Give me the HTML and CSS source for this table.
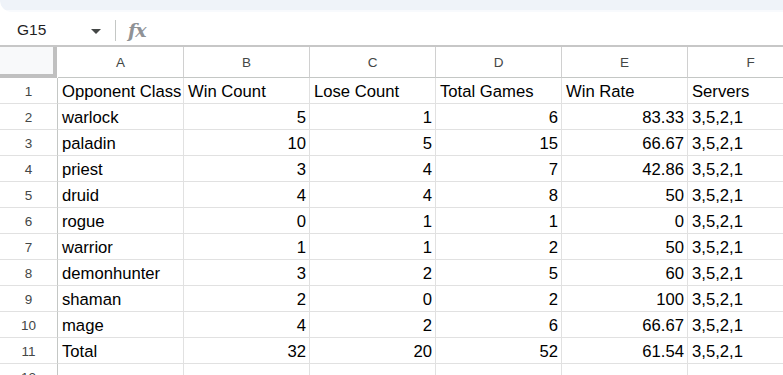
FILE: index.html
```html
<!DOCTYPE html>
<html>
<head>
<meta charset="utf-8">
<link rel="stylesheet" href="styles.css">
</head>
<body>
<div class="strip"><div class="strip-inner"></div></div>
<div class="fbar">
  <div class="namebox">
    <span class="ref">G15</span>
    <span class="caret"></span>
  </div>
  <div class="sep"></div>
  <span class="fx">fx</span>
</div>
<div class="sheet">
  <div class="corner"></div>
  <div class="ch">A</div><div class="ch">B</div><div class="ch">C</div><div class="ch">D</div><div class="ch">E</div><div class="ch">F</div>

  <div class="rh">1</div><div class="c">Opponent Class</div><div class="c">Win Count</div><div class="c">Lose Count</div><div class="c">Total Games</div><div class="c">Win Rate</div><div class="c">Servers</div>
  <div class="rh">2</div><div class="c">warlock</div><div class="c n">5</div><div class="c n">1</div><div class="c n">6</div><div class="c n">83.33</div><div class="c">3,5,2,1</div>
  <div class="rh">3</div><div class="c">paladin</div><div class="c n">10</div><div class="c n">5</div><div class="c n">15</div><div class="c n">66.67</div><div class="c">3,5,2,1</div>
  <div class="rh">4</div><div class="c">priest</div><div class="c n">3</div><div class="c n">4</div><div class="c n">7</div><div class="c n">42.86</div><div class="c">3,5,2,1</div>
  <div class="rh">5</div><div class="c">druid</div><div class="c n">4</div><div class="c n">4</div><div class="c n">8</div><div class="c n">50</div><div class="c">3,5,2,1</div>
  <div class="rh">6</div><div class="c">rogue</div><div class="c n">0</div><div class="c n">1</div><div class="c n">1</div><div class="c n">0</div><div class="c">3,5,2,1</div>
  <div class="rh">7</div><div class="c">warrior</div><div class="c n">1</div><div class="c n">1</div><div class="c n">2</div><div class="c n">50</div><div class="c">3,5,2,1</div>
  <div class="rh">8</div><div class="c">demonhunter</div><div class="c n">3</div><div class="c n">2</div><div class="c n">5</div><div class="c n">60</div><div class="c">3,5,2,1</div>
  <div class="rh">9</div><div class="c">shaman</div><div class="c n">2</div><div class="c n">0</div><div class="c n">2</div><div class="c n">100</div><div class="c">3,5,2,1</div>
  <div class="rh">10</div><div class="c">mage</div><div class="c n">4</div><div class="c n">2</div><div class="c n">6</div><div class="c n">66.67</div><div class="c">3,5,2,1</div>
  <div class="rh">11</div><div class="c">Total</div><div class="c n">32</div><div class="c n">20</div><div class="c n">52</div><div class="c n">61.54</div><div class="c">3,5,2,1</div>
  <div class="rh">12</div><div class="c"></div><div class="c"></div><div class="c"></div><div class="c"></div><div class="c"></div><div class="c"></div>
</div>
</body>
</html>
```
FILE: styles.css
```css
html, body {
  margin: 0;
  padding: 0;
  background: #ffffff;
  overflow: hidden;
  width: 783px;
  height: 375px;
  font-family: "Liberation Sans", Arial, sans-serif;
}

.strip {
  height: 12px;
  background: #ffffff;
}
.strip-inner {
  height: 12px;
  box-sizing: border-box;
  background: #f8fafd;
  border-top: 10px solid #eff3f9;
  border-bottom-left-radius: 14px;
}

.fbar {
  height: 30px;
  padding-top: 3px;
  border-bottom: 2px solid #c7c7c7;
  display: flex;
  align-items: center;
}
.namebox {
  width: 115px;
  display: flex;
  align-items: center;
  box-sizing: border-box;
  padding-left: 17px;
  padding-right: 14px;
}
.ref {
  font-size: 15.5px;
  color: #1f1f1f;
  flex: 1;
}
.caret {
  width: 0;
  height: 0;
  border-left: 5px solid transparent;
  border-right: 5px solid transparent;
  border-top: 5px solid #444746;
  margin-top: 2px;
}
.sep {
  width: 1px;
  height: 21px;
  background: #c4c7c5;
}
.fx {
  font-family: "DejaVu Serif", "Liberation Serif", serif;
  font-style: italic;
  font-weight: bold;
  font-size: 19px;
  color: #8f9296;
  margin-left: 12px;
  letter-spacing: -1px;
}

.sheet {
  display: grid;
  grid-template-columns: 58px repeat(6, 126px);
  grid-template-rows: 31px;
  grid-auto-rows: 26px;
  width: 814px;
}
.sheet > div {
  box-sizing: border-box;
  border-right: 1px solid #e1e1e1;
  border-bottom: 1px solid #e1e1e1;
  white-space: nowrap;
  overflow: hidden;
}

.corner {
  background: #f8f9fa;
  border-right: 4px solid #c0c0c0 !important;
  border-bottom: 4px solid #c0c0c0 !important;
  margin-right: 1px;
}
.ch {
  font-size: 13.5px;
  color: #444746;
  text-align: center;
  line-height: 30px;
  padding-top: 1px;
  border-right-color: #d0d0d0 !important;
  border-bottom-color: #c4c7c5 !important;
}
.rh {
  font-size: 13.5px;
  color: #444746;
  text-align: center;
  line-height: 25px;
  padding-top: 1px;
  border-right-color: #c4c7c5 !important;
}
.c {
  font-size: 16.67px;
  color: #000000;
  line-height: 25px;
  padding: 1px 3px 0 4px;
}
.n {
  text-align: right;
}
```
